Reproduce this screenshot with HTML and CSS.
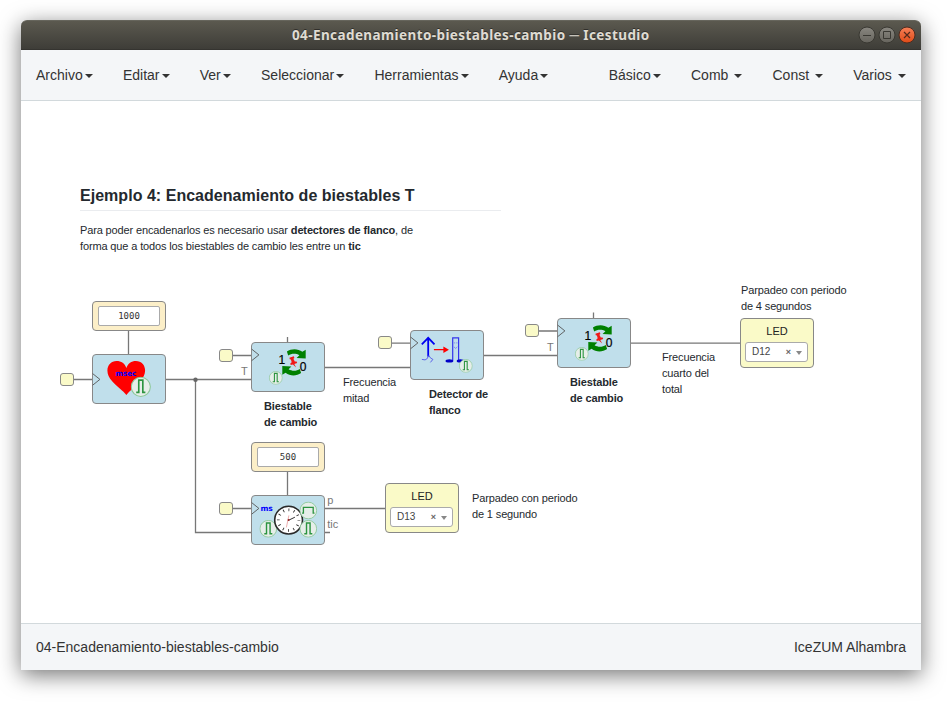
FILE: index.html
```html
<!DOCTYPE html>
<html lang="es">
<head>
<meta charset="utf-8">
<title>04-Encadenamiento-biestables-cambio ─ Icestudio</title>
<link rel="stylesheet" href="styles.css">
</head>
<body>
<svg class="defs" width="0" height="0" aria-hidden="true">
  <defs>
    <linearGradient id="gray" x2="0" y2="1"><stop stop-color="#898780"/><stop offset="1" stop-color="#66645d"/></linearGradient>
    <linearGradient id="orange" x2="0" y2="1"><stop stop-color="#f58058"/><stop offset="1" stop-color="#df4a16"/></linearGradient>
    <symbol id="pulse" viewBox="-10 -10 20 20">
      <circle r="9.4" fill="#e6eee9" stroke="#8cc898"/>
      <path d="M-4.5 5.5H-2V-6.5H2V5.5H4.5" fill="none" stroke="#2c9440" stroke-width="1.6"/>
    </symbol>
    <symbol id="wide" viewBox="-10 -10 20 20">
      <circle r="9.4" fill="#e6eee9" stroke="#8cc898"/>
      <path d="M-7 3H-5.5V-3.5H5.5V3H7" fill="none" stroke="#2c9440" stroke-width="1.5"/>
    </symbol>
    <symbol id="toggle" viewBox="0 0 74 50">
      <path id="turn" d="M35.500 9.200C40 6 46.500 6 51 9.400L54.300 7.400V16.200L45.200 15.700L48 12.900C44.500 10.800 40 11 36.800 13.200Z" fill="#008000"/>
      <use href="#turn" transform="rotate(180 42.600 19.900)"/>
      <path d="M38 15.300L42.400 13.900L43 15.500L42 16.300L43.400 19L45.200 19L45.800 20.600L42.900 21.500L44.800 25L41.500 22L39.300 22.600L38.900 21L40.300 19.900L39.500 17L38.400 16.800Z" fill="#f01818"/>
      <text class="digit" x="27" y="21.200">1</text>
      <text class="digit" x="48.300" y="28.300">0</text>
      <use href="#pulse" x="17.500" y="28.600" width="13.800" height="13.800"/>
    </symbol>
  </defs>
</svg>
<div class="window">
  <header class="titlebar">
    <h1>04-Encadenamiento-biestables-cambio ─ Icestudio</h1>
    <div class="controls">
      <svg viewBox="0 0 18 18"><circle cx="9" cy="9" r="8" fill="url(#gray)" stroke="#393832"/><path d="M5 9.500H13" stroke="#393832"/></svg>
      <svg viewBox="0 0 18 18"><circle cx="9" cy="9" r="8" fill="url(#gray)" stroke="#393832"/><path d="M5.500 5.500H12.500V12.500H5.500Z" fill="none" stroke="#393832"/></svg>
      <svg viewBox="0 0 18 18"><circle cx="9" cy="9" r="8" fill="url(#orange)" stroke="#4b2c20"/><path d="M6 6L12 12M12 6L6 12" stroke="#54291b" stroke-width="1.200"/></svg>
    </div>
  </header>
  <nav class="menubar">
    <div class="menu"><a>Archivo<i class="caret"></i></a><a>Editar<i class="caret"></i></a><a>Ver<i class="caret"></i></a><a>Seleccionar<i class="caret"></i></a><a>Herramientas<i class="caret"></i></a><a>Ayuda<i class="caret"></i></a></div>
    <div class="menu"><a>Básico<i class="caret"></i></a><a>Comb <i class="caret"></i></a><a>Const <i class="caret"></i></a><a>Varios <i class="caret"></i></a></div>
  </nav>
  <main class="canvas">
    <section class="intro">
      <h2>Ejemplo 4: Encadenamiento de biestables T</h2>
      <p>Para poder encadenarlos es necesario usar <b>detectores de flanco</b>, de<br>forma que a todos los biestables de cambio les entre un <b>tic</b></p>
    </section>

    <svg class="wires" viewBox="21 101 900 522">
      <path d="M73 379.500H92M166 379.500H251M195.500 379.500V532.500H251M128.500 331V354M232 355.500H251M325 367.500H410M391 343.200H410M484 355.500H557M538 331H557M631 343.200H740M287.500 337V342M593.500 312.500V318M287.500 472V495M232 508.500H251M325 508.500H385M325 532.500H330"/>
      <circle cx="195.500" cy="379.700" r="2.200"/>
      <text x="241" y="375">T</text><text x="547" y="351">T</text>
      <text x="327.300" y="504">p</text><text x="327.300" y="528">tic</text>
    </svg>

    <i class="pin pin-a"></i><i class="pin pin-b"></i><i class="pin pin-c"></i><i class="pin pin-d"></i><i class="pin pin-e"></i>

    <div class="node const const-a"><span>1000</span></div>
    <div class="node const const-b"><span>500</span></div>

    <div class="node block heart"><svg viewBox="0 0 74 50">
      <path class="clock-in" d="M0 19L7.500 25L0 31"/>
      <path d="M34 40.500C31 36.500 24 31.500 20 27C16.500 23 15 20 15 16C15 10.500 19 6.500 24 6.500C29 6.500 32.500 9 34 13.500C35.500 9 39 6.500 43.500 6.500C49 6.500 52.700 10.500 52.700 16C52.700 20 51 23 47.500 27C43.500 31.500 37 36.500 34 40.500Z" fill="#f00"/>
      <text class="unit" x="23" y="21.200" textLength="21" lengthAdjust="spacingAndGlyphs">msec</text>
      <use href="#pulse" x="38.200" y="22.200" width="20.400" height="20.400"/>
    </svg></div>
    <div class="node block toggle-a"><svg viewBox="0 0 74 50"><path class="clock-in" d="M0 6.500L7.500 12.500L0 18.500"/><use href="#toggle" width="74" height="50"/></svg></div>
    <div class="node block toggle-b"><svg viewBox="0 0 74 50"><path class="clock-in" d="M0 6.500L7.500 12.500L0 18.500"/><use href="#toggle" width="74" height="50"/></svg></div>
    <div class="node block edge"><svg viewBox="0 0 74 50">
      <path class="clock-in" d="M0 6.500L7.500 12.500L0 18.500"/>
      <path d="M17.800 26V8M11.400 14L17.800 7.500L24.100 14" fill="none" stroke="#0000f0" stroke-width="1.800"/>
      <path d="M18 25L17 28L14.700 29.500L11.500 29M18.500 25L20 27.500L22.500 29L20 32" fill="none" stroke="#4444e8" stroke-width=".8"/>
      <path d="M23.500 19.300H34" stroke="#f00" stroke-width="1.300"/><path d="M33 16L38.500 19.300L33 22.600Z" fill="#f00"/>
      <path d="M42.300 30V7.500H48.200V30" fill="none" stroke="#3434ec" stroke-width="1.200"/>
      <path d="M43.500 12.500H44.800M45.800 12.500H47.100M43.500 16.500L45.300 18L47 16.500" fill="none" stroke="#6868ed" stroke-width=".7"/>
      <ellipse cx="39" cy="30.500" rx="3.900" ry="1.600" fill="#0000c8"/><ellipse cx="50" cy="30.500" rx="3.700" ry="1.600" fill="#0000c8"/>
      <use href="#pulse" x="48.500" y="28.600" width="13.800" height="13.800"/>
    </svg></div>
    <div class="node block timer"><svg viewBox="0 0 74 50">
      <path class="clock-in" d="M0 7L7.500 13L0 19"/>
      <text class="unit" x="9" y="15.300" textLength="12.500" lengthAdjust="spacingAndGlyphs">ms</text>
      <use href="#pulse" x="8" y="24.500" width="17.800" height="17.800"/>
      <circle cx="37.200" cy="24.700" r="13.900" fill="#fff" stroke="#292929" stroke-width="1.600"/>
      <circle cx="37.200" cy="24.700" r="10.300" fill="none" stroke="#333" stroke-width="2.800" stroke-dasharray=".9 4.493" stroke-dashoffset=".45"/>
      <path d="M36.500 25.200L43.500 21.800" stroke="#333"/><path d="M37.500 20L35 32" stroke="#e79a9a" stroke-width=".8"/><circle cx="37.200" cy="24.700" r="1" fill="#922"/>
      <use href="#wide" x="48" y="6.200" width="17.800" height="17.800"/>
      <use href="#pulse" x="48" y="24.500" width="17.800" height="17.800"/>
    </svg></div>

    <div class="node led led-a"><strong>LED</strong><div class="select"><span>D12</span><b>×</b><i></i></div></div>
    <div class="node led led-b"><strong>LED</strong><div class="select"><span>D13</span><b>×</b><i></i></div></div>

    <p class="note note-a"><b>Biestable<br>de cambio</b></p>
    <p class="note note-b">Frecuencia<br>mitad</p>
    <p class="note note-c"><b>Detector de<br>flanco</b></p>
    <p class="note note-d"><b>Biestable<br>de cambio</b></p>
    <p class="note note-e">Frecuencia<br>cuarto del<br>total</p>
    <p class="note note-f">Parpadeo con periodo<br>de 4 segundos</p>
    <p class="note note-g">Parpadeo con periodo<br>de 1 segundo</p>
  </main>
  <footer class="status"><span>04-Encadenamiento-biestables-cambio</span><span>IceZUM Alhambra</span></footer>
</div>
</body>
</html>
```
FILE: styles.css
```css
* { box-sizing: border-box; }
body { margin: 0; padding: 20px 26px 38px 21px; background: #fff; overflow: hidden; font: 14px/20px "Liberation Sans", Arial, sans-serif; color: #333; }
.defs { position: absolute; }
.window { width: 900px; height: 650px; display: flex; flex-direction: column; border-radius: 6px 6px 0 0; box-shadow: 0 5px 22px rgba(0,0,0,.55); }

.titlebar { height: 30px; display: grid; grid-template-columns: 1fr auto 1fr; align-items: center; background: linear-gradient(#5b594f, #3e3d38); border-top: 1px solid #66655c; border-bottom: 1px solid #353430; border-radius: 6px 6px 0 0; }
.titlebar h1 { grid-column: 2; margin: 0; width: 358px; white-space: nowrap; font: bold 13.500px/28px "Noto Sans", sans-serif; letter-spacing: .4px; color: #dfdbd2; text-shadow: 0 -1px #302f2b; }
.controls { display: flex; gap: 2px; justify-content: flex-end; padding-right: 5px; }
.controls svg { width: 18px; height: 18px; display: block; }

.menubar { height: 51px; display: flex; justify-content: space-between; background: #f4f6f8; border-bottom: 1px solid #d2d9dc; }
.menu { display: flex; }
.menu a { padding: 15px; white-space: pre; }
.caret { display: inline-block; margin-left: 2.250px; vertical-align: middle; border-top: 4px solid #333; border-left: 4px solid transparent; border-right: 4px solid transparent; }

.canvas { position: relative; flex: 1; background: #fff; overflow: hidden; }
.status { height: 47px; padding: 13px 15px; display: flex; justify-content: space-between; background: #f4f6f8; border-top: 1px solid #d2d9dc; }

.intro { margin: 84px 0 0 59px; width: 421px; color: #24292e; }
.intro h2 { margin: 0 0 11px; height: 26px; border-bottom: 1px solid #eaecef; font-size: 16px; line-height: 21px; letter-spacing: .03px; }
.intro p { margin: 0; font-size: 11px; line-height: 16px; letter-spacing: -.135px; white-space: nowrap; }

.wires { position: absolute; inset: 0; width: 900px; height: 522px; }
.wires path { fill: none; stroke: #777; stroke-width: 1.300; }
.wires circle { fill: #666; }
.wires text { font-size: 11px; fill: #777; }

.pin { position: absolute; width: 14px; height: 13px; border: 1px solid #888; border-radius: 3px; background: #fafac8; }
.pin-a { left: 39px; top: 272px; }
.pin-b { left: 198px; top: 248px; }
.pin-c { left: 357px; top: 235px; }
.pin-d { left: 504px; top: 223px; }
.pin-e { left: 198px; top: 401px; }

.node { position: absolute; width: 74px; height: 50px; border: 1px solid #888; border-radius: 4px; }
.block { background: #c0dfeb; }
.block svg { display: block; width: 74px; height: 50px; margin: -1px; padding: 0; transform: translate(.4px, .4px); }
.heart { left: 71px; top: 253px; }
.toggle-a { left: 230px; top: 241px; }
.edge { left: 389px; top: 229px; }
.toggle-b { left: 536px; top: 217px; }
.timer { left: 230px; top: 394px; }
.clock-in { fill: none; stroke: #555; stroke-width: .9; }
.digit { font: 12px "Liberation Sans", Arial, sans-serif; fill: #000; stroke: #000; stroke-width: .2; }
.unit { font: bold 7.500px "DejaVu Sans", sans-serif; fill: #00f; }

.const { height: 30px; padding: 4px 5px; background: #fcefc8; }
.const span { display: block; height: 20px; border: 1px solid #aaa; border-radius: 2px; background: #fff; text-align: center; font: 9px/18px "DejaVu Sans Mono", monospace; }
.const-a { left: 71px; top: 200px; }
.const-b { left: 230px; top: 341px; }

.led { padding: 5px 5px; background: #fafac8; text-align: center; color: #222; }
.led strong { display: block; font: 11px/14px "Liberation Sans", Arial, sans-serif; }
.led-a { left: 719px; top: 217px; }
.led-b { left: 364px; top: 382px; }
.select { display: flex; align-items: center; height: 20px; margin: 4px 0 0 -1px; padding: 0 5px 0 6px; background: #fff; border: 1px solid #aaa; border-radius: 3px; font-size: 10px; line-height: 18px; color: #444; }
.select span { flex: 1; text-align: left; }
.select b { font-size: 9px; color: #666; }
.select i { margin: 2px 0 0 5px; border-top: 4px solid #888; border-left: 3px solid transparent; border-right: 3px solid transparent; }

.note { position: absolute; margin: 0; font-size: 11px; line-height: 16px; letter-spacing: -.14px; white-space: nowrap; color: #24292e; }
.note-a { left: 243px; top: 297px; }
.note-b { left: 322px; top: 273px; }
.note-c { left: 408px; top: 285px; }
.note-d { left: 549px; top: 273px; }
.note-e { left: 641px; top: 248px; }
.note-f { left: 720px; top: 181px; }
.note-g { left: 451px; top: 389px; }
```
